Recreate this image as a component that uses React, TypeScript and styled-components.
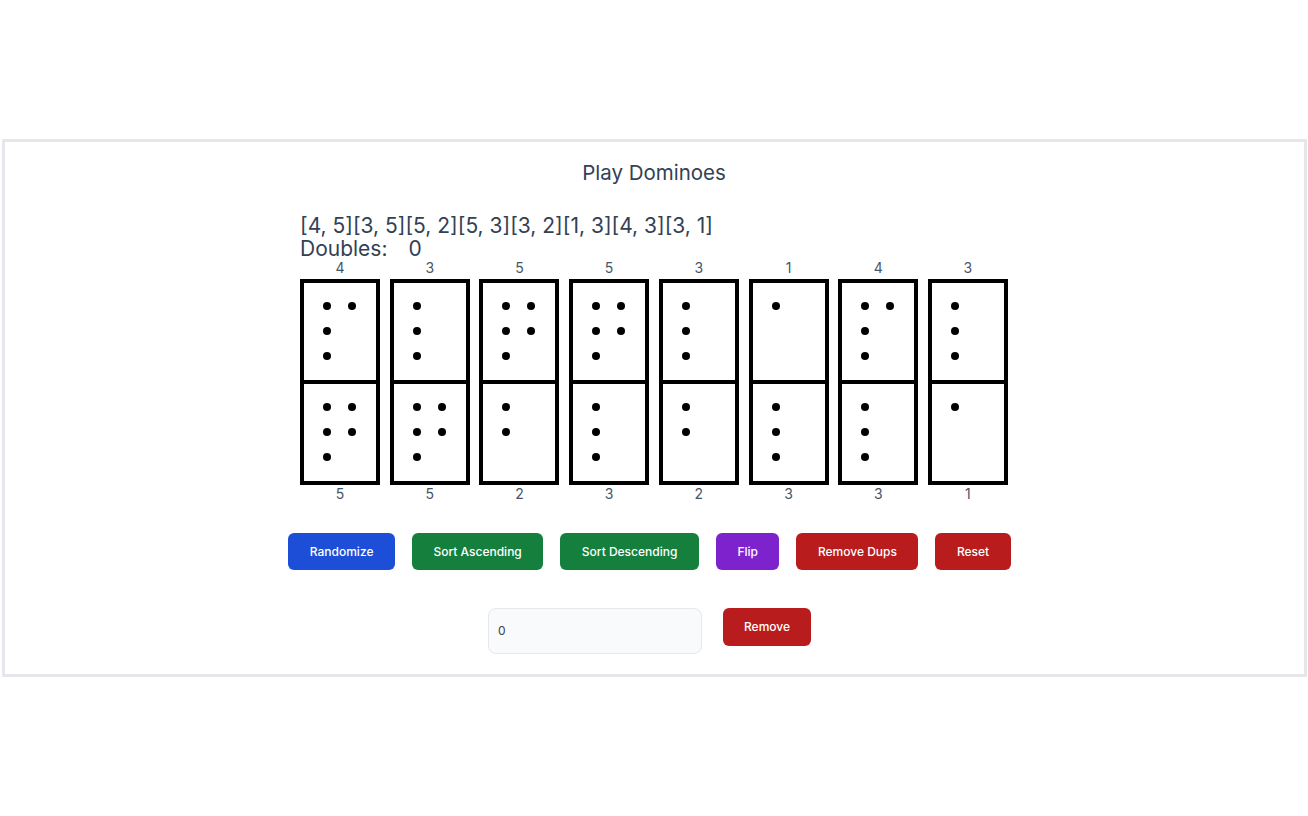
import styled, { createGlobalStyle } from "styled-components";

const dominoes: [number, number][] = [
  [4, 5],
  [3, 5],
  [5, 2],
  [5, 3],
  [3, 2],
  [1, 3],
  [4, 3],
  [3, 1],
];

const GlobalStyle = createGlobalStyle`
  html, body {
    margin: 0;
    padding: 0;
    background: #ffffff;
    font-family: Inter, "Noto Sans", sans-serif;
  }
`;

type Tone = "blue" | "green" | "purple" | "red";

const tones: Record<Tone, string> = {
  blue: "#1d4ed8",
  green: "#15803d",
  purple: "#7e22ce",
  red: "#b91c1c",
};

const buttons: { label: string; tone: Tone }[] = [
  { label: "Randomize", tone: "blue" },
  { label: "Sort Ascending", tone: "green" },
  { label: "Sort Descending", tone: "green" },
  { label: "Flip", tone: "purple" },
  { label: "Remove Dups", tone: "red" },
  { label: "Reset", tone: "red" },
];

const Pips = ({ value }: { value: number }) => (
  <SPips>
    {Array.from({ length: value }).map((_, i) => (
      <SPip key={i} />
    ))}
  </SPips>
);

const Domino = ({ top, bottom }: { top: number; bottom: number }) => (
  <SDomino>
    <SLabel>{top}</SLabel>
    <STile>
      <SHalf $divider>
        <Pips value={top} />
      </SHalf>
      <SHalf>
        <Pips value={bottom} />
      </SHalf>
    </STile>
    <SLabel>{bottom}</SLabel>
  </SDomino>
);

export default function App() {
  const doubles = dominoes.filter(([a, b]) => a === b).length;
  return (
    <>
      <GlobalStyle />
      <SPage>
        <SBox>
          <STitle>Play Dominoes</STitle>
          <SBoard>
            <SText>{dominoes.map(([a, b]) => `[${a}, ${b}]`).join("")}</SText>
            <SText>
              Doubles:<SCount>{doubles}</SCount>
            </SText>
            <SRow>
              {dominoes.map(([a, b], i) => (
                <Domino key={i} top={a} bottom={b} />
              ))}
            </SRow>
          </SBoard>
          <SActions>
            {buttons.map((b) => (
              <SButton key={b.label} $tone={b.tone}>
                {b.label}
              </SButton>
            ))}
          </SActions>
          <SRemoveRow>
            <SInput defaultValue="0" />
            <SButton $tone="red">Remove</SButton>
          </SRemoveRow>
        </SBox>
      </SPage>
    </>
  );
}

const SPage = styled.div`
  min-height: 100vh;
  display: flex;
  align-items: center;
  justify-content: center;
`;

const SBox = styled.div`
  box-sizing: border-box;
  width: 1305px;
  border: 3px solid #e5e7eb;
  padding: 17px 0 20px;
  display: flex;
  flex-direction: column;
  align-items: center;
`;

const STitle = styled.h1`
  margin: 0;
  font-size: 20.5px;
  line-height: 28px;
  font-weight: 400;
  color: #334155;
`;

const SBoard = styled.div`
  width: 708px;
  margin-top: 26.5px;
  display: flex;
  flex-direction: column;
`;

const SText = styled.div`
  font-size: 21px;
  line-height: 23px;
  color: #334155;
`;

const SCount = styled.span`
  margin-left: 21px;
`;

const SRow = styled.div`
  display: flex;
  justify-content: space-between;
`;

const SDomino = styled.div`
  display: flex;
  flex-direction: column;
  align-items: center;
  width: 80px;
`;

const SLabel = styled.span`
  font-size: 14px;
  height: 19px;
  color: #475569;
  &:first-child {
    line-height: 16px;
  }
  &:last-child {
    height: auto;
    line-height: 17px;
  }
`;

const STile = styled.div`
  box-sizing: border-box;
  width: 80px;
  height: 206px;
  border: 4px solid #000;
  display: flex;
  flex-direction: column;
  background: #fff;
`;

const SHalf = styled.div<{ $divider?: boolean }>`
  flex: 1;
  display: flex;
  align-items: center;
  padding-left: 19px;
  border-bottom: ${(p) => (p.$divider ? "4px solid #000" : "none")};
`;

const SPips = styled.div`
  display: grid;
  grid-auto-flow: column;
  grid-template-rows: repeat(3, 8px);
  grid-auto-columns: 8px;
  gap: 17px;
`;

const SPip = styled.span`
  width: 8px;
  height: 8px;
  border-radius: 50%;
  background: #000;
`;

const SActions = styled.div`
  display: flex;
  gap: 17px;
  margin-top: 31px;
  padding-right: 9px;
`;

const SButton = styled.button<{ $tone: Tone }>`
  height: 37px;
  padding: 0 21.5px;
  border: none;
  border-radius: 6px;
  background: ${(p) => tones[p.$tone]};
  color: #fff;
  font-family: Inter, "Noto Sans", sans-serif;
  font-size: 12px;
  font-weight: 500;
  cursor: pointer;
`;

const SRemoveRow = styled.div`
  display: flex;
  align-items: flex-start;
  gap: 21px;
  margin-top: 38px;
  padding-right: 9px;

  ${SButton} {
    width: 88px;
    height: 38px;
    padding: 0;
  }
`;

const SInput = styled.input`
  box-sizing: border-box;
  width: 214px;
  height: 46px;
  padding: 0 9px;
  border: 1px solid #e5e7eb;
  border-radius: 8px;
  background: #f9fafb;
  color: #374151;
  font-family: Inter, "Noto Sans", sans-serif;
  font-size: 12px;
  outline: none;
`;
